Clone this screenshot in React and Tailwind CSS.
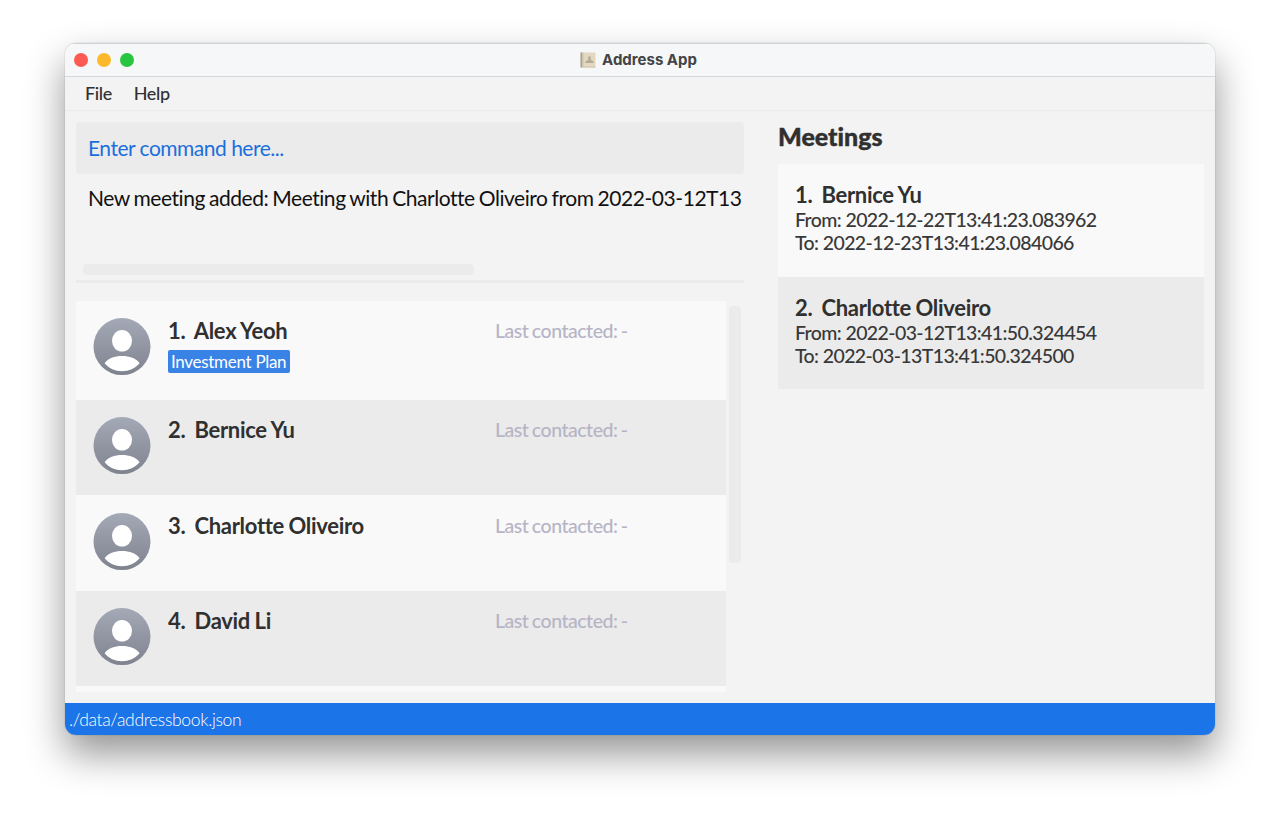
const people = [
  { name: '1.  Alex Yeoh', tag: 'Investment Plan', row: 'h-[99px] bg-[#f9f9f9] pt-[17px]' },
  { name: '2.  Bernice Yu', row: 'h-[95px] bg-[#ebebeb] pt-[17px]' },
  { name: '3.  Charlotte Oliveiro', row: 'h-[96px] bg-[#f9f9f9] pt-[18px]' },
  { name: '4.  David Li', row: 'h-[95px] bg-[#ebebeb] pt-[17px]' },
];

const meetings = [
  {
    name: '1.  Bernice Yu',
    from: '2022-12-22T13:41:23.083962',
    to: '2022-12-23T13:41:23.084066',
    row: 'h-[113px] bg-[#f9f9f9]',
  },
  {
    name: '2.  Charlotte Oliveiro',
    from: '2022-03-12T13:41:50.324454',
    to: '2022-03-13T13:41:50.324500',
    row: 'h-[112px] bg-[#ebebeb]',
  },
];

function Avatar() {
  return (
    <svg className="size-[58px] shrink-0" viewBox="0 0 58 58">
      <defs>
        <linearGradient id="avatar" x1="0" y1="0" x2="0" y2="1">
          <stop offset="0" stopColor="#a4a9b7" />
          <stop offset="1" stopColor="#7f838e" />
        </linearGradient>
      </defs>
      <circle cx="29" cy="28.600" r="28.500" fill="url(#avatar)" />
      <ellipse cx="29" cy="22.800" rx="10" ry="10.800" fill="#fff" />
      <path d="M11.600 45.200C15 40.300 21.500 37.900 29 37.900S43.200 40.300 46.600 45.200C42 50.400 36 53.200 29 53.200S16 50.400 11.600 45.200Z" fill="#fff" />
    </svg>
  );
}

function BookIcon() {
  return (
    <svg className="h-4 w-4" viewBox="0 0 16 16">
      <rect x="0.500" y="0.500" width="15" height="15" rx="0.800" fill="#e4d9c0" />
      <rect x="0.500" y="0.500" width="2" height="15" fill="#aaa59a" />
      <rect x="2.500" y="0.500" width="1" height="15" fill="#cfc5af" />
      <path d="M8.200 4.500h2.600v3.500l2.700 1.300v1.700h-8V9.300L8.200 8Z" fill="#b5ab98" />
      <path d="M3.500 15h12" stroke="#cdc2aa" />
    </svg>
  );
}

export default function App() {
  return (
    <div className="flex h-[820px] w-[1280px] items-start justify-center overflow-hidden bg-white pt-[43px] font-['Lato',sans-serif] text-[#303030] [font-variant-ligatures:no-common-ligatures]">
      <div className="flex h-[692px] w-[1150px] flex-col overflow-hidden rounded-[11px] bg-[#f3f3f3] shadow-[0_0_1px_rgba(0,0,0,0.45),0_19px_38px_rgba(0,0,0,0.42)]">
        <header className="grid h-[34px] shrink-0 grid-cols-[1fr_auto_1fr] items-center border-t border-b border-t-[#d0d1d2] border-b-[#d6d7d8] bg-[#f5f7f9] px-[9px]">
          <div className="flex gap-[9px]">
            <span className="size-[14px] rounded-full bg-[#fc5b54]" />
            <span className="size-[14px] rounded-full bg-[#fdb92c]" />
            <span className="size-[14px] rounded-full bg-[#28c63f]" />
          </div>
          <div className="flex items-center gap-[6px] pr-[3px] pb-px">
            <BookIcon />
            <h1 className="font-['Inter',sans-serif] text-[15px] leading-5 font-bold text-[#434445]">Address App</h1>
          </div>
        </header>
        <nav className="flex h-[34px] shrink-0 items-center gap-[22px] border-b border-[#ebebeb] px-[20px] text-[18px] font-medium tracking-[-0.4px]">
          <span>File</span>
          <span>Help</span>
        </nav>
        <main className="flex h-[592px] shrink-0 gap-[34px] pr-[11px] pl-[11px]">
          <section className="flex w-[668px] shrink-0 flex-col pt-[11px]">
            <div className="flex h-[52px] shrink-0 items-center rounded-[4px] bg-[#ebebeb] pl-[12px] text-[21px] tracking-[-0.5px] text-[#1b6fdc]">Enter command here...</div>
            <div className="flex h-[109px] shrink-0 flex-col justify-between border-b-[3px] border-[#ebebeb] pt-[10px] pb-[5px]">
              <p className="pl-[12px] text-[21px] leading-[28px] tracking-[-0.45px] [word-spacing:-0.9px] whitespace-nowrap text-[#111]">New meeting added: Meeting with Charlotte Oliveiro from 2022-03-12T13</p>
              <div className="ml-[7px] h-[11px] w-[391px] rounded-[4px] bg-[#ebebeb]" />
            </div>
            <div className="mt-[18px] flex h-[391px] gap-[3px] overflow-hidden">
              <ul className="w-[650px] shrink-0">
                {people.map((p) => (
                  <li key={p.name} className={`flex px-[17px] ${p.row}`}>
                    <Avatar />
                    <div className="-mt-px flex w-[344px] shrink-0 flex-col items-start pl-[17px]">
                      <h2 className="text-[22px] leading-[28px] font-bold tracking-[-0.3px] [word-spacing:-0.5px] whitespace-pre">{p.name}</h2>
                      {p.tag && <span className="mt-[5px] rounded-[2px] bg-[#3a83e6] pr-[4px] pl-[3px] text-[17px] leading-[23px] tracking-[-0.3px] whitespace-nowrap text-white">{p.tag}</span>}
                    </div>
                    <p className="-mt-px text-[19.5px] leading-[28px] font-medium tracking-[-0.48px] [word-spacing:-1px] whitespace-nowrap text-[#b6b4c5]">Last contacted: -</p>
                  </li>
                ))}
                <li className="h-[6px] bg-[#f9f9f9]" />
              </ul>
              <div className="mt-[5px] h-[257px] w-[12px] rounded-[4px] bg-[#ebebeb]" />
            </div>
          </section>
          <aside className="flex-1 pt-[8px]">
            <h2 className="text-[25px] leading-[34px] font-black [-webkit-text-stroke:0.4px_#303030]">Meetings</h2>
            <ul className="mt-[11px]">
              {meetings.map((m) => (
                <li key={m.name} className={`px-[17px] pt-[17px] text-[19.5px] leading-[23px] font-medium tracking-[-0.6px] whitespace-pre text-[#383838] ${m.row}`}>
                  <h3 className="text-[22px] leading-[27px] font-bold tracking-[-0.3px] [word-spacing:-0.5px] text-[#303030]">{m.name}</h3>
                  <p>From: {m.from}</p>
                  <p>To: {m.to}</p>
                </li>
              ))}
            </ul>
          </aside>
        </main>
        <footer className="flex h-[32px] shrink-0 items-center bg-[#1b74e8] px-[4px] pt-[2px] text-[17.5px] font-light tracking-[-0.34px] text-white">./data/addressbook.json</footer>
      </div>
    </div>
  );
}
